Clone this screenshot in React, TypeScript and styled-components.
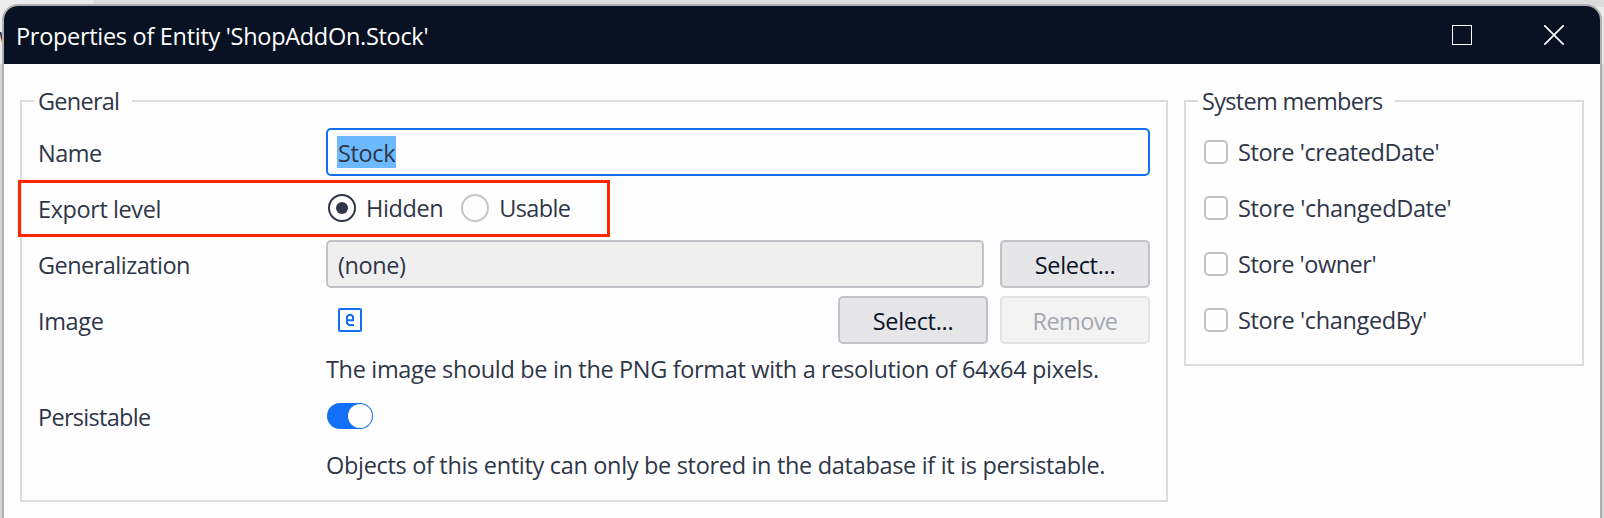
import React from "react";
import styled, { createGlobalStyle } from "styled-components";

const GlobalStyle = createGlobalStyle`
  *, *::before, *::after { box-sizing: border-box; }
  html, body { margin: 0; padding: 0; overflow: hidden; }
  body {
    background: #dcdcdc;
    color: #2f3647;
    font: 23.5px/32px "Open Sans", "Noto Sans", sans-serif;
  }
`;

const Desktop = styled.div`
  position: relative;
  height: 518px;
  overflow: hidden;
  padding: 4px 2px 0;
  background:
    linear-gradient(#ececec, #ececec) 0 0 / 93px 64px no-repeat,
    linear-gradient(#e8e8e8, #e8e8e8) 100% 7px / 10px 57px no-repeat,
    linear-gradient(#dcdcdc, #dcdcdc) 0 0 / 100% 64px no-repeat,
    #d2d2d2;
`;

const CoveredMenu = styled.span`
  position: absolute;
  left: -1px;
  top: 20px;
`;

const Window = styled.section`
  position: relative;
  height: 560px;
  border: 2px solid #b0b0b0;
  border-radius: 16px 16px 0 0;
  background: #fefefe;
  overflow: hidden;
`;

const TitleBar = styled.header`
  display: flex;
  align-items: center;
  height: 58px;
  padding: 0 36px 0 12px;
  background: #091222;
  color: #fff;
`;

const Text = styled.span<{ $track?: number; $drop?: number }>`
  display: block;
  white-space: pre;
  letter-spacing: ${(p) => p.$track ?? 0}px;
  padding-top: ${(p) => (p.$drop ?? 0) * 2}px;
`;

const WindowButtons = styled.div`
  display: flex;
  gap: 72px;
  margin: 0 0 0 auto;
`;

const Content = styled.main`
  display: flex;
  align-items: flex-start;
  gap: 16px;
  padding: 21px 16px 0;
`;

const Group = styled.fieldset<{ $width: number; $height: number }>`
  width: ${(p) => p.$width}px;
  height: ${(p) => p.$height}px;
  min-width: 0;
  margin: 0;
  padding: 0 16px 0 12px;
  border: 2px solid #dcdcdc;
`;

const Legend = styled.legend<{ $width: number }>`
  width: ${(p) => p.$width}px;
  height: 32px;
  padding: 0 0 0 4px;
`;

const Rows = styled.div<{ $indent: number }>`
  display: flex;
  flex-direction: column;
  gap: 8px;
  padding: 11px 0 0 ${(p) => p.$indent}px;
`;

const Row = styled.div`
  display: grid;
  grid-template-columns: 288px 1fr;
  align-items: center;
  height: 48px;
`;

const HighlightedRow = styled(Row)`
  position: relative;

  &::after {
    content: "";
    position: absolute;
    left: -20px;
    top: -4px;
    width: 592px;
    height: 57px;
    border: 3px solid #ff2600;
  }
`;

const Controls = styled.div<{ $gap?: number }>`
  display: flex;
  align-items: center;
  gap: ${(p) => p.$gap ?? 16}px;
`;

const Field = styled.div<{ $readOnly?: boolean }>`
  display: flex;
  flex: 1;
  align-items: center;
  height: 48px;
  padding: 0 ${(p) => (p.$readOnly ? 10 : 9)}px;
  border: 2px solid ${(p) => (p.$readOnly ? "#c1c1c7" : "#146ff8")};
  border-radius: 5px;
  background: ${(p) => (p.$readOnly ? "#efefef" : "#fefefe")};
`;

const Selection = styled.span`
  display: flex;
  width: 59px;
  height: 32px;
  padding: 1px 0 0 1px;
  background: #6cb9ff;
`;

const Button = styled.button`
  display: flex;
  align-items: center;
  justify-content: center;
  width: 150px;
  height: 48px;
  padding: 0;
  border: 2px solid #c1c1c7;
  border-radius: 5px;
  background: #e6e6e9;
  color: #0a1326;
  font: inherit;

  &:disabled {
    border-color: #e1e1e6;
    background: #f3f3f3;
    color: #a5a8af;
  }
`;

const RadioGroup = styled(Controls)`
  padding-left: 2px;
`;

const RadioOption = styled.label`
  display: flex;
  align-items: center;
  gap: 10px;
`;

const Radio = styled.span<{ $on?: boolean }>`
  display: grid;
  place-items: center;
  width: 28px;
  height: 28px;
  border: 2px solid ${(p) => (p.$on ? "#2f3647" : "#c4c4ca")};
  border-radius: 50%;

  &::after {
    content: "";
    width: 12px;
    height: 12px;
    border-radius: 50%;
    background: ${(p) => (p.$on ? "#2f3647" : "transparent")};
  }
`;

const Spacer = styled.div`
  flex: 1;
`;

const Hint = styled.p`
  height: 32px;
  margin: 0 0 0 288px;
`;

const Switch = styled.span`
  display: flex;
  justify-content: flex-end;
  width: 46px;
  height: 26px;
  margin-left: 1px;
  padding: 1px;
  border-radius: 13px;
  background: #146ff8;

  &::after {
    content: "";
    width: 24px;
    height: 24px;
    border-radius: 50%;
    background: #fefefe;
  }
`;

const CheckRow = styled.label`
  display: flex;
  align-items: center;
  gap: 10px;
  height: 48px;
`;

const CheckBox = styled.span`
  width: 24px;
  height: 24px;
  border: 2px solid #c1c1c7;
  border-radius: 5px;
`;

const EntityIcon = styled.svg`
  display: block;
  margin-left: 12px;
`;

const members: [string, number][] = [
  ["Store 'createdDate'", -0.43],
  ["Store 'changedDate'", -0.34],
  ["Store 'owner'", -0.46],
  ["Store 'changedBy'", -0.37],
];

export default function App() {
  return (
    <Desktop>
      <GlobalStyle />
      <CoveredMenu>w</CoveredMenu>
      <Window>
        <TitleBar>
          <Text $track={-0.3} $drop={1}>Properties of Entity 'ShopAddOn.Stock'</Text>
          <WindowButtons>
            <svg width="20" height="20" fill="none" stroke="#fff">
              <rect x="0.5" y="0.5" width="19" height="19" />
            </svg>
            <svg width="20" height="20" fill="none" stroke="#fff" strokeWidth="1.7">
              <path d="M0.3 0.3 19.7 19.7M19.7 0.3 0.3 19.7" />
            </svg>
          </WindowButtons>
        </TitleBar>
        <Content>
          <Group $width={1148} $height={417}>
            <Legend $width={98}><Text $track={-0.75}>General</Text></Legend>
            <Rows $indent={4}>
              <Row>
                <Text $track={-0.5} $drop={1}>Name</Text>
                <Field>
                  <Selection><Text $track={-0.35}>Stock</Text></Selection>
                </Field>
              </Row>
              <HighlightedRow>
                <Text $track={-0.42} $drop={1}>Export level</Text>
                <RadioGroup $gap={18}>
                  <RadioOption>
                    <Radio $on />
                    <Text $track={-0.4}>Hidden</Text>
                  </RadioOption>
                  <RadioOption>
                    <Radio />
                    <Text $track={-0.65}>Usable</Text>
                  </RadioOption>
                </RadioGroup>
              </HighlightedRow>
              <Row>
                <Text $track={-0.53} $drop={1}>Generalization</Text>
                <Controls>
                  <Field $readOnly>
                    <Text $track={-0.42} $drop={1}>(none)</Text>
                  </Field>
                  <Button><Text $track={-0.3} $drop={1}>Select...</Text></Button>
                </Controls>
              </Row>
              <Row>
                <Text $track={-0.35} $drop={1}>Image</Text>
                <Controls $gap={12}>
                  <EntityIcon width="24" height="24" fill="none" stroke="#146ff8" strokeWidth="2">
                    <rect x="1" y="1" width="22" height="22" rx="1" />
                    <path d="M16 17H11L9 15.3V8.7L10.7 7H13.5L15 8.7V12.2H9" />
                  </EntityIcon>
                  <Spacer />
                  <Button><Text $track={-0.3} $drop={1}>Select...</Text></Button>
                  <Button disabled><Text $track={-0.6} $drop={1}>Remove</Text></Button>
                </Controls>
              </Row>
              <Hint><Text $track={-0.34} $drop={0.5}>The image should be in the PNG format with a resolution of 64x64 pixels.</Text></Hint>
              <Row>
                <Text $track={-0.7} $drop={1}>Persistable</Text>
                <Switch />
              </Row>
              <Hint><Text $track={-0.32} $drop={0.5}>Objects of this entity can only be stored in the database if it is persistable.</Text></Hint>
            </Rows>
          </Group>
          <Group $width={400} $height={281}>
            <Legend $width={197}><Text $track={-0.7}>System members</Text></Legend>
            <Rows $indent={6}>
              {members.map(([label, track]) => (
                <CheckRow key={label}>
                  <CheckBox />
                  <Text $track={track}>{label}</Text>
                </CheckRow>
              ))}
            </Rows>
          </Group>
        </Content>
      </Window>
    </Desktop>
  );
}
